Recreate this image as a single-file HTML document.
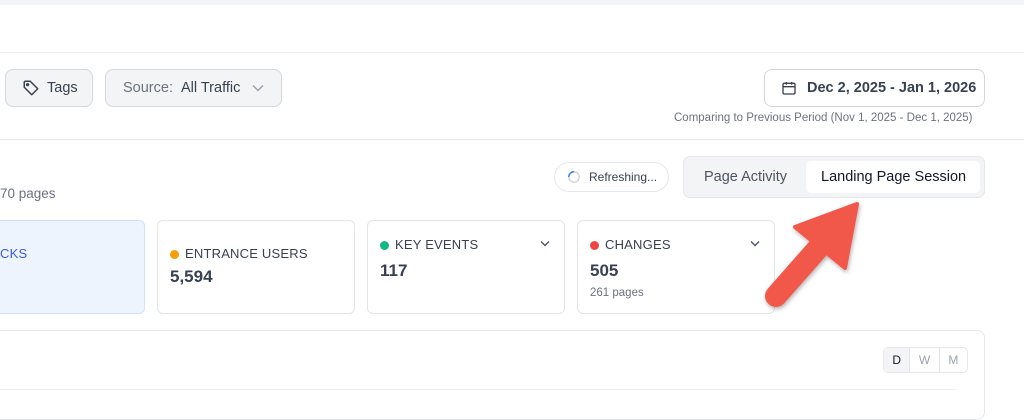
<!DOCTYPE html><html><head><style>
body{margin:0;width:1024px;height:400px;overflow:hidden;background:#fff;font-family:"Liberation Sans",sans-serif;position:relative;color:#1f2937}
.a{position:absolute}
.btn{position:absolute;border:1px solid #d4d7dd;border-radius:8px;background:#f3f4f6;box-sizing:border-box;display:flex;align-items:center;font-size:14.5px}
.card{position:absolute;top:220px;height:94px;border:1px solid #e3e5e9;border-radius:6px;box-sizing:border-box;background:#fff}
.lbl{position:absolute;font-size:13px;color:#374151;letter-spacing:.2px}
.dot{display:inline-block;width:9px;height:9px;border-radius:50%;margin-right:6px;vertical-align:-1px}
.val{position:absolute;font-size:17px;font-weight:bold;color:#374151}
</style></head><body>
<div class="a" style="left:0;top:0;width:1024px;height:5px;background:#f3f4f6"></div>
<div class="a" style="left:0;top:52px;width:1024px;height:1px;background:#eceef1"></div>
<div class="a" style="left:0;top:139px;width:1024px;height:1px;background:#e5e7eb"></div>
<div class="btn" style="left:5px;top:69px;width:88px;height:38px;padding-left:16px;color:#374151">
<svg width="18" height="18" viewBox="0 0 24 24" fill="none" stroke="#374151" stroke-width="2" stroke-linejoin="round"><path d="M3 4v7l10 10 8-8L11 3H4z"/><circle cx="7.5" cy="7.5" r="1.2"/></svg><span style="margin-left:7px">Tags</span></div>
<div class="btn" style="left:105px;top:69px;width:177px;height:38px;padding-left:17px"><span style="color:#6b7280">Source:</span><span style="margin-left:8px;color:#374151">All Traffic</span><svg style="margin-left:12px" width="12" height="8" viewBox="0 0 12 8"><path d="M1 1.5l5 5 5-5" fill="none" stroke="#9ca3af" stroke-width="1.5"/></svg></div>
<div class="btn" style="left:764px;top:69px;width:221px;height:38px;background:#fff;padding-left:16px;font-weight:bold;color:#374151">
<svg width="16" height="16" viewBox="0 0 24 24" fill="none" stroke="#374151" stroke-width="2"><rect x="3" y="5" width="18" height="16" rx="2"/><path d="M3 10h18M8 3v4M16 3v4"/></svg><span style="margin-left:10px">Dec 2, 2025 - Jan 1, 2026</span></div>
<div class="a" style="left:674px;top:112px;font-size:11.5px;color:#6b7280">Comparing to Previous Period (Nov 1, 2025 - Dec 1, 2025)</div>
<div class="a" style="left:0;top:186px;font-size:13.5px;color:#6b7280">70 pages</div>
<div class="a" style="left:554px;top:162px;width:115px;height:30px;border:1px solid #e5e7eb;border-radius:16px;box-sizing:border-box;display:flex;align-items:center;padding-left:12px;font-size:12px;color:#374151">
<svg width="14" height="14" viewBox="0 0 16 16"><circle cx="8" cy="8" r="6" fill="none" stroke="#d1d5db" stroke-width="1.6"/><path d="M2 8a6 6 0 0 1 6-6" fill="none" stroke="#3b82f6" stroke-width="1.6"/></svg><span style="margin-left:8px">Refreshing...</span></div>
<div class="a" style="left:683px;top:156px;width:302px;height:42px;background:#f3f4f6;border:1px solid #e5e7eb;border-radius:7px;box-sizing:border-box"></div>
<div class="a" style="left:704px;top:169px;font-size:14.5px;color:#4b5563">Page Activity</div>
<div class="a" style="left:806px;top:161px;width:174px;height:32px;background:#fff;border-radius:5px"></div>
<div class="a" style="left:821px;top:169px;font-size:14.5px;color:#111827">Landing Page Session</div>
<div class="card" style="left:-10px;width:155px;background:#eef4fe;border-color:#cfe0fb"></div>
<div class="lbl" style="left:0;top:246px;color:#3b5bdb">CKS</div>
<div class="card" style="left:157px;width:198px"></div>
<div class="lbl" style="left:170px;top:246px"><span class="dot" style="background:#f59e0b"></span>ENTRANCE USERS</div>
<div class="val" style="left:170px;top:267px">5,594</div>
<div class="card" style="left:367px;width:198px"></div>
<div class="lbl" style="left:380px;top:237px"><span class="dot" style="background:#10b981"></span>KEY EVENTS</div>
<svg class="a" style="left:540px;top:240px" width="10" height="7" viewBox="0 0 10 7"><path d="M1 1.5l4 4 4-4" fill="none" stroke="#4b5563" stroke-width="1.4"/></svg>
<div class="val" style="left:380px;top:261px">117</div>
<div class="card" style="left:577px;width:198px"></div>
<div class="lbl" style="left:590px;top:237px"><span class="dot" style="background:#ef4444"></span>CHANGES</div>
<svg class="a" style="left:750px;top:240px" width="10" height="7" viewBox="0 0 10 7"><path d="M1 1.5l4 4 4-4" fill="none" stroke="#4b5563" stroke-width="1.4"/></svg>
<div class="val" style="left:590px;top:261px">505</div>
<div class="a" style="left:590px;top:287px;font-size:11.5px;color:#6b7280">261 pages</div>
<div class="a" style="left:-10px;top:330px;width:995px;height:90px;border:1px solid #e5e7eb;border-radius:8px;box-sizing:border-box"></div>
<div class="a" style="left:0;top:389px;width:956px;height:1px;background:#eef0f2"></div>
<div class="a" style="left:883px;top:347px;width:85px;height:26px;border:1px solid #e5e7eb;border-radius:5px;box-sizing:border-box;display:flex;font-size:12px">
<div style="width:26px;background:#f3f4f6;text-align:center;line-height:24px;color:#111827">D</div><div style="width:29px;text-align:center;line-height:24px;color:#9ca3af;border-left:1px solid #e5e7eb">W</div><div style="width:28px;text-align:center;line-height:24px;color:#9ca3af;border-left:1px solid #e5e7eb">M</div></div>
<svg class="a" style="left:0;top:0" width="1024" height="400"><defs><filter id="s" x="-20%" y="-20%" width="140%" height="140%"><feDropShadow dx="1" dy="2" stdDeviation="2" flood-opacity=".3"/></filter></defs>
<g filter="url(#s)">
<line x1="776" y1="296" x2="828" y2="237" stroke="#f1584a" stroke-width="22" stroke-linecap="round"/>
<path d="M857 204 L795 227 L845 268 Z" fill="#f1584a" stroke="#f1584a" stroke-width="4" stroke-linejoin="round"/></g></svg>
</body></html>
